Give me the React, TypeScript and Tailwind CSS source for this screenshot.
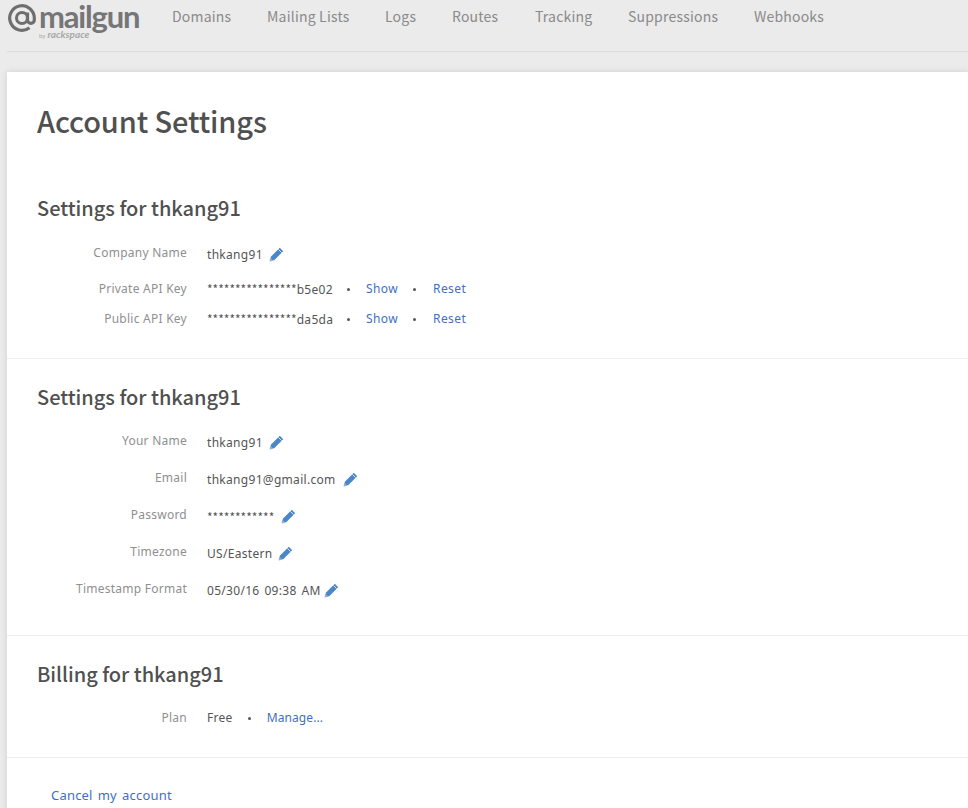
const body = "font-['Noto_Sans',sans-serif]";
const source = "font-['Noto_Sans_CJK_KR',sans-serif]";

function Pencil() {
  return (
    <svg width="15" height="15" viewBox="0 0 15 15" className="shrink-0">
      <path d="M10.8 0.8 L14.2 4.2 L5.2 13.2 L1.8 13.2 L1.8 9.8 Z" fill="#4a86c8" />
      <path d="M9.4 2.4 L12.6 5.6" stroke="#fff" strokeWidth="0.8" />
      <path d="M0.6 14.4 L1.2 10.6 L4.4 13.8 Z" fill="#8fb0d4" />
    </svg>
  );
}

function Row({ label, children, h, lift = "mb-[4px]" }: { label: string; children: React.ReactNode; h: string; lift?: string }) {
  return (
    <div className={`flex items-center ${h}`}>
      <div className={`w-[180px] shrink-0 text-right text-[12px] tracking-[0.25px] text-[#8f8f8f] ${lift}`}>{label}</div>
      <div className="ml-5 flex items-center text-[12px] tracking-[0.3px] [word-spacing:1.5px] text-[#555]">{children}</div>
    </div>
  );
}

function Dot({ cls }: { cls: string }) {
  return <span className={`h-[3px] w-[3px] rounded-full bg-[#555] ${cls}`} />;
}

function Link({ children, cls = "" }: { children: React.ReactNode; cls?: string }) {
  return <a className={`text-[12px] text-[#3f6fc4] ${cls}`}>{children}</a>;
}

function Stars({ children }: { children: React.ReactNode }) {
  return <span className={`${source} tracking-normal`}>{children}</span>;
}

function Heading({ children }: { children: React.ReactNode }) {
  return <h2 className={`${source} text-[20px] font-medium leading-[26px] tracking-[-0.02px] text-[#505050] pl-[30px]`}>{children}</h2>;
}

const nav = [
  ["Domains", "w-[95px]"],
  ["Mailing Lists", "w-[118px]"],
  ["Logs", "w-[67px]"],
  ["Routes", "w-[83px]"],
  ["Tracking", "w-[93px]"],
  ["Suppressions", "w-[126px]"],
  ["Webhooks", "w-[90px]"],
];

export default function App() {
  return (
    <div className={`h-[808px] w-[968px] overflow-hidden bg-[#ebebeb] ${body}`}>
      <header className="ml-[7px] flex h-[52px] items-start border-b border-[#dcdcdc]">
        <div className="flex h-[36px] w-[165px] shrink-0 items-start">
          <svg width="30" height="30" viewBox="0 0 30 30" className="mt-[3px] shrink-0">
            <path d="M20.5 9.5 V17 a3.4 3.4 0 0 0 6.8 0 V15 A12.3 12.3 0 1 0 22.5 24.8" fill="none" stroke="#6e6e6e" strokeWidth="3.2" />
            <circle cx="15" cy="15" r="5.5" fill="none" stroke="#6e6e6e" strokeWidth="3" />
          </svg>
          <div className="ml-[2px] mt-[2px] flex flex-col">
            <span className="block font-['Lato',sans-serif] text-[31px] font-bold leading-[28px] tracking-[-1.2px] text-[#767676]">mailgun</span>
            <span className="flex items-baseline font-['Lato',sans-serif] leading-[8px] text-[#a8a8a8]">
              <span className="text-[6px]">by</span>
              <span className="ml-[2px] text-[10px] italic font-bold">rackspace</span>
            </span>
          </div>
        </div>
        <nav className={`${source} flex h-[32px] items-center text-[14px] text-[#8a8a8a]`}>
          {nav.map(([t, w]) => (
            <span key={t} className={`${w} shrink-0 tracking-[0.2px]`}>{t}</span>
          ))}
        </nav>
      </header>
      <main className="ml-[7px] mt-[20px] h-[800px] bg-white shadow-[0_0_6px_rgba(0,0,0,0.12)]">
        <div className="h-[287px] border-b border-[#eeeeee]">
          <h1 className={`${source} pl-[30px] pt-[28px] text-[29px] font-medium leading-[40px] tracking-[-0.12px] text-[#505050]`}>Account Settings</h1>
          <div className="mt-[55px]"><Heading>Settings for thkang91</Heading></div>
          <div className="mt-[14px]">
            <Row label="Company Name" h="h-[39px]"><span>thkang91</span><span className="ml-[6px]"><Pencil /></span></Row>
            <Row label="Private API Key" h="h-[30px]" lift="mb-0">
              <span className="w-[125px]"><Stars>****************</Stars>b5e02</span>
              <Dot cls="ml-[15px]" /><Link cls="ml-[16px] tracking-[0.4px]">Show</Link><Dot cls="ml-[15px]" /><Link cls="ml-[17px] tracking-[0.4px]">Reset</Link>
            </Row>
            <Row label="Public API Key" h="h-[30px]" lift="mb-0">
              <span className="w-[125px]"><Stars>****************</Stars>da5da</span>
              <Dot cls="ml-[15px]" /><Link cls="ml-[16px] tracking-[0.4px]">Show</Link><Dot cls="ml-[15px]" /><Link cls="ml-[17px] tracking-[0.4px]">Reset</Link>
            </Row>
          </div>
        </div>
        <div className="h-[277px] border-b border-[#eeeeee] pt-[25px]">
          <Heading>Settings for thkang91</Heading>
          <div className="mt-[14px]">
            <Row label="Your Name" h="h-[37px]"><span>thkang91</span><span className="ml-[6px]"><Pencil /></span></Row>
            <Row label="Email" h="h-[37px]"><span>thkang91@gmail.com</span><span className="ml-[7px]"><Pencil /></span></Row>
            <Row label="Password" h="h-[37px]"><Stars>************</Stars><span className="ml-[7px]"><Pencil /></span></Row>
            <Row label="Timezone" h="h-[37px]"><span>US/Eastern</span><span className="ml-[6px]"><Pencil /></span></Row>
            <Row label="Timestamp Format" h="h-[37px]"><span>05/30/16 09:38 AM</span><span className="ml-[3px]"><Pencil /></span></Row>
          </div>
        </div>
        <div className="h-[122px] border-b border-[#eeeeee] pt-[25px]">
          <Heading>Billing for thkang91</Heading>
          <div className="mt-[17px]">
            <Row label="Plan" h="h-[28px]" lift="mb-0">
              <span>Free</span><Dot cls="ml-[15px]" /><Link cls="ml-[16px] tracking-[0.1px]">Manage...</Link>
            </Row>
          </div>
        </div>
        <div className="pl-[44px] pt-[27px] text-[13px] leading-[20px] tracking-[0.2px] [word-spacing:1.5px] text-[#3f6fc4]">Cancel my account</div>
      </main>
    </div>
  );
}
